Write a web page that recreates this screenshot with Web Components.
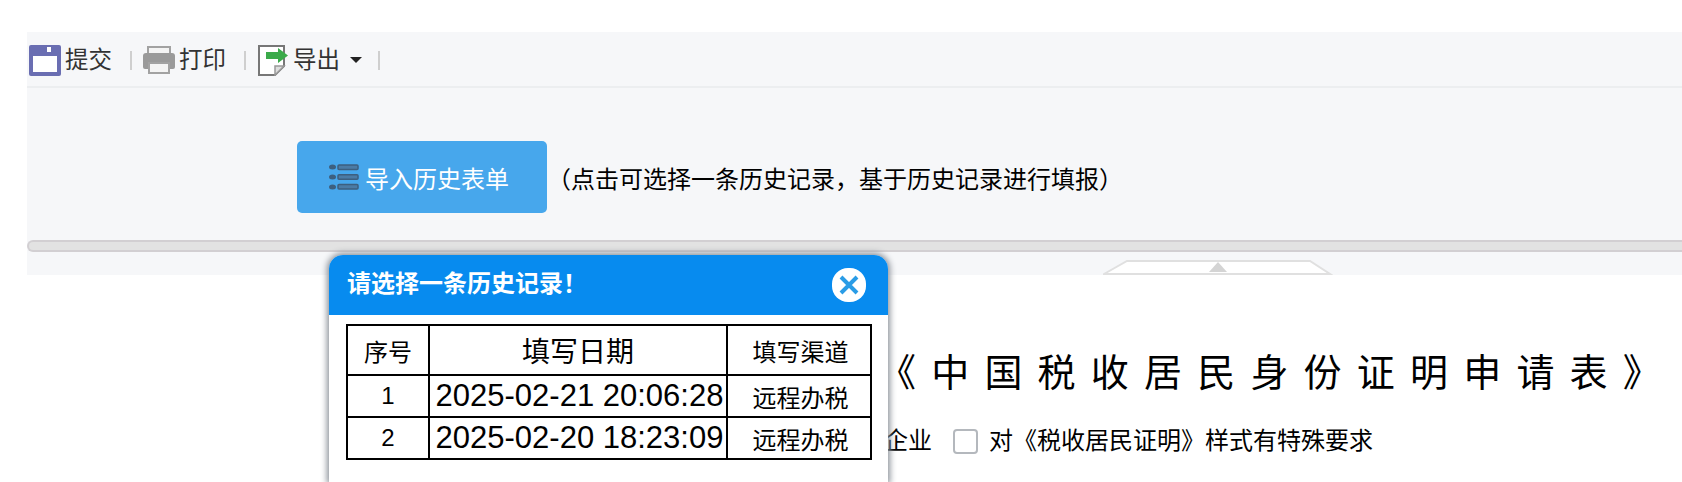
<!DOCTYPE html>
<html lang="zh">
<head>
<meta charset="utf-8">
<style>
html, body { margin: 0; height: 482px; overflow: hidden; background: #fff; }
body { font-family: "Liberation Sans", "Noto Sans CJK SC", sans-serif; color: #000; position: relative; }
</style>
</head>
<body>
<tax-toolbar></tax-toolbar>
<tax-import></tax-import>
<tax-splitter></tax-splitter>
<tax-form></tax-form>
<history-dialog></history-dialog>

<script>
const FONT = '"Liberation Sans", "Noto Sans CJK SC", sans-serif';

class TaxToolbar extends HTMLElement {
    constructor() {
        super();
        this.attachShadow({ mode: 'open' });
        this.shadowRoot.innerHTML = `
            <style>
            :host {
                display: flex;
                align-items: center;
                box-sizing: border-box;
                margin: 32px 0 0 27px;
                height: 56px;
                padding: 2px 0 0 2px;
                background: #f6f7f9;
                border-bottom: 2px solid #eceef0;
                font: 23.5px ${FONT};
                color: #333;
            }
            .item { display: flex; align-items: center; gap: 4px; }
            .item span.t { margin-bottom: 4px; }
            .sep { width: 2px; height: 19px; background: #cfcfcf; margin: 0 11px 0 18px; }
            svg { display: block; }
            .caret { width: 0; height: 0; border: 6px solid transparent; border-top-color: #222; border-bottom: 0; margin-left: 6px; }
            </style>
            <div class="item">
                <svg width="32" height="32" viewBox="0 0 32 32">
                    <rect x="0" y="1" width="32" height="31" rx="2" fill="#6a6eb2"/>
                    <rect x="4" y="12" width="24" height="16" fill="#fff"/>
                    <rect x="18" y="3" width="4" height="5" fill="#fff"/>
                </svg>
                <span class="t">提交</span>
            </div>
            <div class="sep"></div>
            <div class="item">
                <svg width="32" height="32" viewBox="0 0 32 32">
                    <path d="M5 3h22v8H5z" fill="#f4f4f4" stroke="#a2a2a2" stroke-width="2"/>
                    <path d="M3 9h26q3 0 3 3v11q0 2-2 2H2q-2 0-2-2V12q0-3 3-3z" fill="#9a9a9a"/>
                    <path d="M6 19h20v10H6z" fill="#f4f4f4" stroke="#a2a2a2" stroke-width="2"/>
                </svg>
                <span class="t">打印</span>
            </div>
            <div class="sep"></div>
            <div class="item">
                <svg width="32" height="32" viewBox="0 0 32 32">
                    <path d="M2 2h25v20l-9 9H2z" fill="#fff" stroke="#777" stroke-width="2"/>
                    <path d="M18 31v-9h9z" fill="#ddd" stroke="#999" stroke-width="1.5"/>
                    <path d="M9 8h12V4l10 7.5L21 19v-4H9z" fill="#3aaa4a"/>
                </svg>
                <span class="t">导出</span>
                <span class="caret"></span>
            </div>
            <div class="sep" style="margin-left: 16px"></div>
        `;
    }
}
customElements.define('tax-toolbar', TaxToolbar);

class TaxImport extends HTMLElement {
    constructor() {
        super();
        this.attachShadow({ mode: 'open' });
        this.shadowRoot.innerHTML = `
            <style>
            :host {
                display: flex;
                align-items: center;
                box-sizing: border-box;
                margin-left: 27px;
                height: 152px;
                padding: 53px 0 27px 270px;
                background: #f6f7f9;
                font: 24px ${FONT};
            }
            .btn {
                display: flex;
                align-items: center;
                gap: 6px;
                width: 250px;
                height: 72px;
                padding-left: 32px;
                border-radius: 5px;
                background: #47a7ec;
                color: #fff;
                box-sizing: border-box;
            }
            svg { display: block; }
            </style>
            <div class="btn">
                <svg width="30" height="26" viewBox="0 0 30 26">
                    <g fill="#3d5f7f"><ellipse cx="3.5" cy="3" rx="3.5" ry="2.5"/><ellipse cx="3.5" cy="13" rx="3.5" ry="2.5"/><ellipse cx="3.5" cy="23" rx="3.5" ry="2.5"/></g>
                    <g fill="#4b7ba5" stroke="#3d5f7f" stroke-width="1.5"><rect x="9" y="1" width="20" height="4.5" rx="1"/><rect x="9" y="10.8" width="20" height="4.5" rx="1"/><rect x="9" y="20.6" width="20" height="4.5" rx="1"/></g>
                </svg>
                <span>导入历史表单</span>
            </div>
            <span>（点击可选择一条历史记录，基于历史记录进行填报）</span>
        `;
    }
}
customElements.define('tax-import', TaxImport);

class TaxSplitter extends HTMLElement {
    constructor() {
        super();
        this.attachShadow({ mode: 'open' });
        this.shadowRoot.innerHTML = `
            <style>
            :host { display: block; margin-left: 27px; height: 35px; background: #f6f7f9; position: relative; overflow: hidden; }
            .bar {
                height: 12px;
                box-sizing: border-box;
                background: #e2e2e2;
                border: 2px solid #d2cfd2;
                border-right: 0;
                border-radius: 7px 0 0 7px;
            }
            svg { position: absolute; left: 1076px; top: 19px; }
            </style>
            <div class="bar"></div>
            <svg width="230" height="16" viewBox="0 0 230 16">
                <path d="M1 15L24 2H207L227 15z" fill="#fff" stroke="#e0e0e0" stroke-width="2"/>
                <path d="M106 13L115 3l9 10z" fill="#d4d4d4"/>
            </svg>
        `;
    }
}
customElements.define('tax-splitter', TaxSplitter);

class TaxForm extends HTMLElement {
    constructor() {
        super();
        this.attachShadow({ mode: 'open' });
        this.shadowRoot.innerHTML = `
            <style>
            :host { display: block; padding-left: 888px; font-family: ${FONT}; }
            h1 { margin: 0 0 0 -10px; padding-top: 75px; font-size: 38px; font-weight: 400; line-height: 46px; letter-spacing: 15.2px; white-space: nowrap; }
            .opts { display: flex; align-items: center; margin: 30px 0 0 -4px; font-size: 24px; line-height: 30px; white-space: nowrap; }
            .box { width: 25px; height: 25px; box-sizing: border-box; border: 2px solid #b4b8bd; border-radius: 4px; background: #fff; margin: 0 11px 0 21px; }
            </style>
            <h1>《中国税收居民身份证明申请表》</h1>
            <div class="opts"><span>企业</span><span class="box"></span><span>对《税收居民证明》样式有特殊要求</span></div>
        `;
    }
}
customElements.define('tax-form', TaxForm);

class HistoryDialog extends HTMLElement {
    constructor() {
        super();
        this.attachShadow({ mode: 'open' });
        this.shadowRoot.innerHTML = `
            <style>
            :host {
                position: absolute;
                left: 329px;
                top: 255px;
                width: 559px;
                height: 227px;
                box-sizing: border-box;
                background: #fff;
                border-radius: 14px 14px 0 0;
                box-shadow: 0 0 6px 2px #8a9098;
                font-family: ${FONT};
                color: #000;
            }
            header {
                display: flex;
                align-items: center;
                justify-content: space-between;
                height: 60px;
                padding: 0 21px 0 18px;
                background: #078bef;
                border-radius: 14px 14px 0 0;
                color: #fff;
                font-size: 24px;
                font-weight: 700;
            }
            header span { margin-bottom: 7px; }
            svg { display: block; }
            table { border-collapse: collapse; margin: 9px 0 0 17px; width: 524px; table-layout: fixed; }
            td { border: 2px solid #000; text-align: center; padding: 0; font-size: 24px; height: 40px; white-space: nowrap; }
            tr:first-child td { height: 48px; }
            td:last-child { padding-left: 3px; }
            .date { font-size: 31px; padding-left: 3px; }
            .head { font-size: 28px; }
            </style>
            <header>
                <span>请选择一条历史记录！</span>
                <svg width="36" height="36" viewBox="0 0 36 36">
                    <rect x="1" y="1" width="34" height="34" rx="16" fill="#fff"/>
                    <path d="M10 10L26 26M26 10L10 26" stroke="#2a9ce6" stroke-width="4"/>
                </svg>
            </header>
            <table>
                <colgroup><col style="width:82px"><col style="width:298px"><col style="width:144px"></colgroup>
                <tr><td>序号</td><td class="head">填写日期</td><td>填写渠道</td></tr>
                <tr><td>1</td><td class="date">2025-02-21 20:06:28</td><td>远程办税</td></tr>
                <tr><td>2</td><td class="date">2025-02-20 18:23:09</td><td>远程办税</td></tr>
            </table>
        `;
    }
}
customElements.define('history-dialog', HistoryDialog);
</script>
</body>
</html>
